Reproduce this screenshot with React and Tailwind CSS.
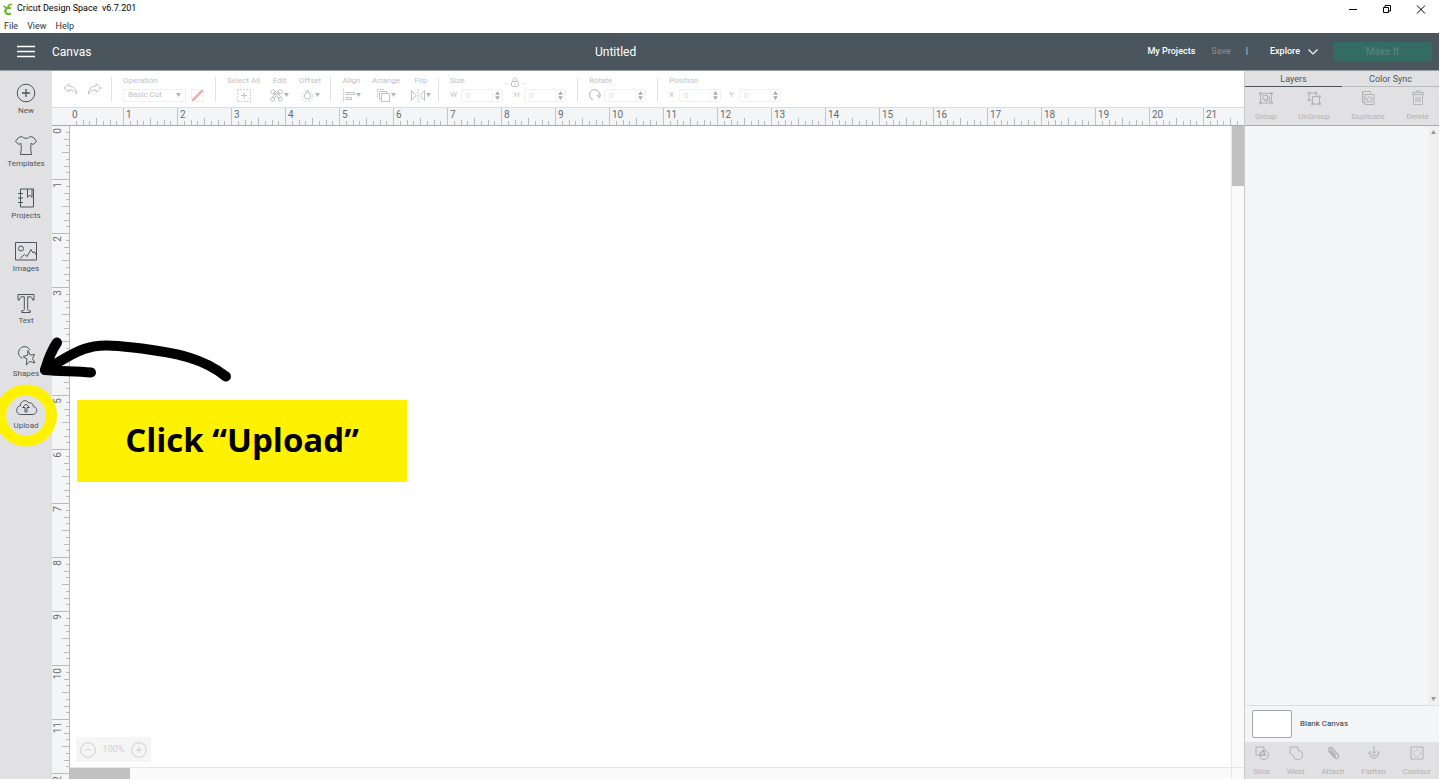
import React, { useState } from 'react';

const tools = ['New', 'Templates', 'Projects', 'Images', 'Text', 'Shapes', 'Upload'];
const inchesX = Array.from({ length: 22 }, (_, i) => i);
const inchesY = Array.from({ length: 13 }, (_, i) => i);

const Icon = ({ w, h, className = '', children }) => (
  <svg
    width={w}
    height={h}
    viewBox={`0 0 ${w} ${h}`}
    fill="none"
    stroke="currentColor"
    strokeWidth="1"
    className={`shrink-0 ${className}`}
    aria-hidden="true"
  >
    {children}
  </svg>
);

const toolIcons = {
  New: (
    <>
      <circle cx="12" cy="12" r="8.800" />
      <path d="M12 8v8M8 12h8" strokeWidth="1.300" />
    </>
  ),
  Templates: (
    <path d="M8 2.500c1.200 2.400 6.800 2.400 8 0l3.500 1 3 4-3.500 3-1.800-1.300c-.8 3-.5 7 .3 11.300h-11c.8-4.300 1.100-8.300.3-11.300L5 10.500l-3.500-3 3-4z" />
  ),
  Projects: (
    <>
      <path d="M6.500 3h13v18h-13zM13.500 3v8.500l2.300-2.500 2.200 2.500V3" />
      <path d="M4 7.500h5M4 12h5M4 16.500h5" strokeWidth="1.200" />
    </>
  ),
  Images: (
    <>
      <path d="M1.500 3.500h21v17.500h-21z" />
      <circle cx="7" cy="9.500" r="2.500" />
      <path d="M6 19.500l4.500-4 2.500 2 4-7 2 3.500 1.500-1.500 2 4" />
    </>
  ),
  Text: (
    <path d="M4 3.500h16v5.500h-1.500c-.2-2.200-.8-3.200-2.500-3.200h-2.300V18.500c0 1 .6 1.300 2.600 1.300v1.700H7.700v-1.700c2 0 2.600-.3 2.600-1.300V5.800H8C6.300 5.800 5.700 6.800 5.500 9H4z" />
  ),
  Shapes: (
    <>
      <path d="M8.500 14.300A6 6 0 1 1 16 6.200" />
      <path d="M14 6.500l-.3 4.700-4.700 1.300 4 2.500-.8 6 3.800-3.500 5 1.500-2.500-4.500 2-4-4.300.5z" />
    </>
  ),
  Upload: (
    <>
      <path d="M6.500 18.500h11.500c6 0 6-7.500 1.200-8 .3-3-2.700-4.300-4.400-3.300C12.500 2.500 6 5 6.500 9.700 1.500 10 1.500 18.500 6.500 18.500z" />
      <path d="M11 16v-4.500H8.500L12 8l3.500 3.500H13V16z" />
    </>
  ),
};

const Caret = () => (
  <svg width="5" height="4" viewBox="0 0 5 4" className="shrink-0 fill-[#b4b7ba]" aria-hidden="true">
    <path d="M0 0h5L2.500 4z" />
  </svg>
);

const Group = ({ className = '', children }) => (
  <div className={`flex h-[25px] shrink-0 border-r border-[#e2e2e4] pl-[11px] ${className}`}>{children}</div>
);

const MenuTool = ({ label, caret = true, children }) => (
  <button className="flex flex-col items-center gap-1">
    <span className="h-2 leading-2">{label}</span>
    <span className="flex items-center gap-px">
      {children}
      {caret && <Caret />}
    </span>
  </button>
);

const NumberField = ({ label, name }) => (
  <label className="flex items-center gap-1">
    {label && <span className="min-w-[6px]">{label}</span>}
    <span className="flex h-[13px] w-[42px] items-center rounded-xs border border-[#f0f0f1]">
      <input
        type="text"
        aria-label={name}
        defaultValue="0"
        className="h-full w-0 grow border-r border-[#f3f3f4] pl-1 text-[#d9dbdd] outline-none"
      />
      <svg width="9" height="9" viewBox="0 0 9 9" className="shrink-0 fill-[#a9adb1]" aria-hidden="true">
        <path d="M4.500 0L7 3.800H2zM4.500 9L7 5.200H2z" />
      </svg>
    </span>
  </label>
);

const LayerTool = ({ label, children }) => (
  <button className="flex flex-col items-center gap-[6px] text-[8px] leading-[10px] text-[#b0b1b4]">
    <Icon w={16} h={16}>{children}</Icon>
    {label}
  </button>
);

const tickX = ['h-1', 'h-[5px]', 'h-1', 'h-[7px]', 'h-1', 'h-[5px]', 'h-1'];
const tickY = ['w-[3px]', 'w-[5px]', 'w-[3px]', 'w-[7px]', 'w-[3px]', 'w-[5px]', 'w-[3px]'];

const RulerX = () => (
  <div className="flex h-[19px] shrink-0 overflow-hidden border-t border-b border-t-[#dcdde0] border-b-[#a9abae] bg-[#f4f5f7] pl-[17px]">
    {inchesX.map((n) => (
      <div key={n} className={`relative flex w-[54px] shrink-0 items-end border-l ${n ? 'border-[#c4c5c8]' : 'border-transparent'}`}>
        <span className="absolute top-0 left-[2px] text-[10px] leading-[14px] text-[#666c73]">{n}</span>
        {tickX.map((h, i) => (
          <span key={i} className={`flex-1 border-r border-[#b9babd] ${h}`} />
        ))}
        <span className="flex-1" />
      </div>
    ))}
  </div>
);

const RulerY = () => (
  <div className="flex w-[18px] shrink-0 flex-col overflow-hidden border-r border-[#b9babd] bg-[#f4f5f7]">
    {inchesY.map((n) => (
      <div key={n} className="relative flex h-[54px] shrink-0 flex-col items-end border-b border-[#b9babd]">
        <span className="absolute top-[2px] left-0 rotate-180 text-[10px] leading-3 text-[#666c73] [writing-mode:vertical-rl]">{n}</span>
        {tickY.map((w, i) => (
          <span key={i} className={`flex-1 border-b border-[#b9babd] ${w}`} />
        ))}
        <span className="flex-1" />
      </div>
    ))}
  </div>
);

const TitleBar = () => (
  <div className="h-[33px] shrink-0 bg-white text-[9px] text-black">
    <div className="flex h-[18px] items-center pr-[13px] pl-[3px]">
      <Icon w={11} h={13} className="text-[#6cb526]">
        <path d="M7.800 5.800A3.200 3.200 0 1 0 7.800 10.200" strokeWidth="2.200" />
        <path d="M3.500 4.800L.5 2.800M5 4.500c0-2 1-3.300 4-3.300" strokeWidth="1.500" />
      </Icon>
      <span className="ml-[3px] grow whitespace-pre">Cricut Design Space  v6.7.201</span>
      <div className="flex items-center gap-[24px]">
        <button aria-label="Minimize"><Icon w={10} h={9}><path d="M1 4.500h8" /></Icon></button>
        <button aria-label="Restore"><Icon w={10} h={9}><path d="M1.500 2.500h5v5h-5zM3 2.500V.5h5.500V6H7" /></Icon></button>
        <button aria-label="Close"><Icon w={10} h={9}><path d="M1 .5l8 8M9 .5l-8 8" /></Icon></button>
      </div>
    </div>
    <nav className="flex h-[15px] items-center gap-[9px] pl-1 leading-3 text-[#333]">
      <button>File</button>
      <button>View</button>
      <button>Help</button>
    </nav>
  </div>
);

const Header = () => (
  <header className="grid h-[38px] shrink-0 grid-cols-[575px_1fr_auto] items-center border-b border-[#999ea4] bg-[#4b555d] pr-[7px] text-[9px] font-medium text-white">
    <div className="flex items-center pl-[17px]">
      <button aria-label="Menu"><Icon w={18} h={13}><path d="M0 1.500h18M0 6.500h18M0 11.500h18" strokeWidth="1.400" /></Icon></button>
      <span className="ml-[17px] text-[12px] font-normal">Canvas</span>
    </div>
    <h1 className="pl-5 text-[12px] font-normal">Untitled</h1>
    <div className="flex items-center">
      <a href="#projects">My Projects</a>
      <button className="ml-4 text-[#7d858b]">Save</button>
      <span className="ml-[15px] text-[#d5d1c8]">|</span>
      <button className="ml-[22px] flex items-center gap-2">
        Explore
        <Icon w={10} h={6}><path d="M.5.5L5 5l4.500-4.500" strokeWidth="1.200" /></Icon>
      </button>
      <button className="ml-[15px] h-[19px] w-[99px] rounded-xs bg-[#346c64] text-[10px] text-[#598078]">Make It</button>
    </div>
  </header>
);

const Toolbar = () => (
  <div className="flex h-9 shrink-0 items-center overflow-hidden bg-white text-[8px] leading-2 text-[#bfc2c5]">
    <Group className="w-[60px] items-center gap-[9px]">
      <button aria-label="Undo"><Icon w={15} h={12}><path d="M6 .8L1 5l5 4.200V6.800c4 0 6 1.200 7.500 4.400.4-5-2.500-8-7.500-8z" /></Icon></button>
      <button aria-label="Redo"><Icon w={15} h={12}><path d="M9 .8L14 5 9 9.200V6.800c-4 0-6 1.200-7.500 4.400-.4-5 2.500-8 7.500-8z" /></Icon></button>
    </Group>
    <Group className="w-[104px] flex-col gap-1">
      <label htmlFor="operation" className="h-2">Operation</label>
      <div className="flex items-center gap-[5px]">
        <span className="flex h-[13px] w-[63px] items-center border border-[#f0f0f1] pr-1">
          <select id="operation" className="w-0 grow appearance-none pl-1 outline-none">
            <option>Basic Cut</option>
          </select>
          <Caret />
        </span>
        <button aria-label="Color" className="h-[13px] w-[13px] border border-[#f0f0f1]">
          <Icon w={11} h={11}><path d="M0 11L11 0" stroke="#efabb0" strokeWidth="2.600" /></Icon>
        </button>
      </div>
    </Group>
    <Group className="w-[115px] gap-[10px]">
      <MenuTool label="Select All" caret={false}>
        <Icon w={14} h={13}><path d="M.5.5h13v12H.5z" strokeDasharray="1.500 1.500" /><path d="M7 3.500v6M4 6.500h6" /></Icon>
      </MenuTool>
      <MenuTool label="Edit">
        <Icon w={13} h={13}>
          <path d="M3.500 3.500l6 6M9.500 3.500l-6 6M5 2l6 6M8 2L2 8" />
          <circle cx="2.800" cy="2.800" r="2" /><circle cx="10.200" cy="2.800" r="2" /><circle cx="2.800" cy="10.200" r="2" /><circle cx="10.200" cy="10.200" r="2" />
        </Icon>
      </MenuTool>
      <MenuTool label="Offset">
        <Icon w={13} h={13}><circle cx="6.500" cy="7" r="3.200" /><path d="M5 3.500l1.500-2L8 3.500" /><circle cx="6.500" cy="7" r="5.500" strokeDasharray="1.200 2" /></Icon>
      </MenuTool>
    </Group>
    <Group className="w-[108px] gap-[11px]">
      <MenuTool label="Align">
        <Icon w={13} h={13}><path d="M1.500 0v13" strokeDasharray="1.500 1" /><path d="M3.500 3.500h9M3.500 5.500h9v-2M3.500 8.500h6v2h-6" /></Icon>
      </MenuTool>
      <MenuTool label="Arrange">
        <Icon w={13} h={13}><path d="M4.500 4.500h8v8h-8zM4 10H2.500V2.500H10V4" /><path d="M.5 8V.5H8" strokeDasharray="1.500 1" /></Icon>
      </MenuTool>
      <MenuTool label="Flip">
        <Icon w={14} h={13}><path d="M.5 1.500v10l4.500-5zM13.500 1.500v10L9 6.500z" /><path d="M7 0v13" strokeDasharray="2 1" /></Icon>
      </MenuTool>
    </Group>
    <Group className="w-[139px] flex-col gap-1">
      <div className="flex h-2 items-start">
        <span className="w-[53px]">Size</span>
        <button aria-label="Lock proportions" className="ml-[2px]">
          <Icon w={20} h={12}>
            <path d="M0 6.500h3M17 6.500h3" stroke="#e2e4e6" />
            <rect x="6.500" y="4.500" width="7" height="5" rx="1.500" />
            <path d="M8 4.500V2.800C8 .5 12 .5 12 2.800v1.700M10 6v2" />
          </Icon>
        </button>
      </div>
      <div className="flex gap-[11px]">
        <NumberField label="W" name="Width" />
        <NumberField label="H" name="Height" />
      </div>
    </Group>
    <Group className="w-[80px] flex-col gap-1">
      <span className="h-2">Rotate</span>
      <div className="flex items-center gap-[3px]">
        <Icon w={12} h={12}><path d="M4 10.500A5 5 0 1 1 10.500 6.500M8 6l2.300 2.500L12 5.500" strokeWidth="1.300" /></Icon>
        <NumberField name="Rotation" />
      </div>
    </Group>
    <div className="flex h-[25px] shrink-0 flex-col gap-1 pl-[11px]">
      <span className="h-2">Position</span>
      <div className="flex gap-2">
        <NumberField label="X" name="X position" />
        <NumberField label="Y" name="Y position" />
      </div>
    </div>
  </div>
);

const LayersPanel = () => {
  const [tab, setTab] = useState('Layers');

  return (
    <aside className="flex w-[195px] shrink-0 flex-col border-l border-[#c9cacd] bg-[#f4f5f7]">
      <div className="grid h-4 shrink-0 grid-cols-2 bg-[#e1e1e3] text-[9px] leading-[14px] text-[#4b555d]">
        {['Layers', 'Color Sync'].map((name) => (
          <button
            key={name}
            onClick={() => setTab(name)}
            className={`border-b ${tab === name ? 'border-[#4b555d]' : 'border-[#b9babd]'}`}
          >
            {name}
          </button>
        ))}
      </div>
      <div className="flex h-[39px] shrink-0 items-center justify-between border-b border-[#a9abae] bg-[#e1e1e3] px-[10px]">
        <LayerTool label="Group">
          <path d="M2.500 3.500h11v9.500h-11zM5 5.500h4.500V9.500H5zM9.500 7h2v4H7V9.500" />
          <path d="M1.500 2.500h2v2h-2zM12.500 2.500h2v2h-2zM1.500 12h2v2h-2zM12.500 12h2v2h-2z" strokeWidth=".8" />
        </LayerTool>
        <LayerTool label="UnGroup">
          <path d="M3 3h7v3M3 3v7h3M6.500 6.500h7V14h-7z" />
          <path d="M2 2h2v2H2zM9 2h2v2H9zM2 9h2v2H2zM12.500 5.500h2v2h-2zM12.500 13h2v2h-2zM5.500 13h2v2h-2z" strokeWidth=".7" />
        </LayerTool>
        <LayerTool label="Duplicate">
          <path d="M4.500 12.500h-2v-11h8v2M5 4.500h9v10H5z" />
          <path d="M9.500 6l1 2.200 2.500.2-2 1.600.8 2.500-2.300-1.300-2.300 1.300L8 10 6 8.400l2.500-.2zM2.500 4h2M2.500 7h2M2.500 10h2" strokeWidth=".8" />
        </LayerTool>
        <LayerTool label="Delete">
          <path d="M3.500 4.500h9v10h-9zM2.500 2.500h11v2h-11zM6 2V.8h4V2M6 7v5M8 7v5M10 7v5" strokeWidth=".9" />
        </LayerTool>
      </div>
      <div className="flex min-h-0 grow">
        <div className="grow" />
        <div className="flex w-[11px] flex-col items-center justify-between bg-[#f0f0f1] py-1 text-[#96989b]">
          <svg width="5" height="4" viewBox="0 0 5 4" fill="currentColor" aria-hidden="true"><path d="M0 4h5L2.500 0z" /></svg>
          <svg width="5" height="4" viewBox="0 0 5 4" fill="currentColor" aria-hidden="true"><path d="M0 0h5L2.500 4z" /></svg>
        </div>
      </div>
      <div className="flex h-[37px] shrink-0 items-center gap-2 border-t border-[#dddee0] pl-[7px]">
        <button aria-label="Canvas color" className="h-7 w-10 rounded-xs border border-[#a5a6a9] bg-white" />
        <span className="text-[8px] text-[#333]">Blank Canvas</span>
      </div>
      <div className="flex h-[37px] shrink-0 items-center justify-between bg-[#e1e1e3] px-[8px]">
        <LayerTool label="Slice">
          <path d="M2 2h8v8H2z" />
          <circle cx="10" cy="10" r="4.500" />
          <path d="M6 10.500L9 5.500l3 5z" />
        </LayerTool>
        <LayerTool label="Weld">
          <path d="M2 2h8v3.500a4.500 4.500 0 1 1-4.500 5L2 8.500z" />
        </LayerTool>
        <LayerTool label="Attach">
          <path d="M5 6l5.500 6M3.500 3.500c1.500-2 3.500-1 4.500.2l5 6c2 3-1.500 5-3.500 2.800L4 6.500c-1-1.500 1-3 2-1.800l5 5.500" strokeWidth="1.200" />
        </LayerTool>
        <LayerTool label="Flatten">
          <path d="M8 1v7.500M6 6.500l2 2 2-2M5 6.500L2.500 8 8 11l5.500-3L11 6.500M3 10.500L8 13.500l5-3" />
        </LayerTool>
        <LayerTool label="Contour">
          <path d="M2 2h12v12H2z" />
          <circle cx="8" cy="8" r="3.500" strokeDasharray="1.500 1.500" />
        </LayerTool>
      </div>
    </aside>
  );
};

// Hand-drawn arrow, highlight ring and callout drawn over the workspace
const Callout = () => (
  <>
    <svg width="240" height="450" viewBox="0 0 240 450" fill="none" className="pointer-events-none absolute top-0 left-0" aria-hidden="true">
      <circle cx="26" cy="415.500" r="25.500" stroke="#fff200" strokeWidth="11" />
      <g stroke="#000" strokeWidth="10" strokeLinecap="round" strokeLinejoin="round">
        <path d="M226 376.500C204 359 180 353 133 347.500C113 345 98 344 84 349C70 354 61 361 45 370" />
        <path d="M57 342.500C51 351 48 360 45 370C60 371.500 75 371 91 372.500" />
      </g>
    </svg>
    <div className="absolute top-[400px] left-[77px] flex h-[82px] w-[330px] items-center justify-center bg-[#fff200] pb-[2px] font-['Open_Sans',sans-serif] text-[33px] font-bold text-black">
      Click “Upload”
    </div>
  </>
);

export default function App() {
  return (
    <div className="relative flex h-screen flex-col overflow-hidden bg-white pr-px pb-px font-[Roboto,sans-serif]">
      <TitleBar />
      <Header />
      <div className="flex min-h-0 grow">
        <nav className="w-[52px] shrink-0 bg-[#e1e1e3] pt-[10px]">
          <div className="flex h-[368px] flex-col">
            {tools.map((name) => (
              <button key={name} className="flex flex-1 flex-col items-center text-[8px] leading-3 text-[#4b555d]">
                <Icon w={24} h={24}>{toolIcons[name]}</Icon>
                {name}
              </button>
            ))}
          </div>
        </nav>
        <main className="flex min-w-0 grow flex-col">
          <Toolbar />
          <RulerX />
          <div className="flex min-h-0 grow">
            <RulerY />
            <div className="flex min-w-0 grow flex-col">
              <div className="flex min-h-0 grow">
                <div className="flex grow items-end pb-[5px] pl-[6px]">
                  <div className="flex h-[25px] w-[75px] items-center justify-between rounded-xs bg-[#f5f5f5] px-1 text-[9px] text-[#cfcfd1]">
                    <button aria-label="Zoom out"><Icon w={16} h={16}><circle cx="8" cy="8" r="7.300" /><path d="M5 8h6" /></Icon></button>
                    100%
                    <button aria-label="Zoom in"><Icon w={16} h={16}><circle cx="8" cy="8" r="7.300" /><path d="M5 8h6M8 5v6" /></Icon></button>
                  </div>
                </div>
                <div className="w-[13px] shrink-0 border-l border-[#e6e6e7] bg-[#fafafa]">
                  <div className="h-[60px] bg-[#c1c1c1]" />
                </div>
              </div>
              <div className="flex h-3 shrink-0 border-t border-[#e6e6e7] bg-[#fafafa]">
                <div className="w-[60px] bg-[#c1c1c1]" />
                <div className="grow" />
                <div className="w-[13px] border-l border-[#e6e6e7]" />
              </div>
            </div>
          </div>
        </main>
        <LayersPanel />
      </div>
      <Callout />
    </div>
  );
}
